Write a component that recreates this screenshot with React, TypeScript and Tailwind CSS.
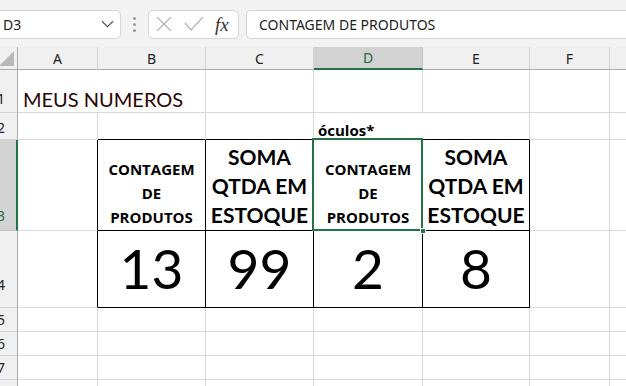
import React from "react";

const cols = ["A", "B", "C", "D", "E", "F", "G"];
const rowHeights = [43, 27, 91, 77, 24, 24, 24, 24];
// offset of the row number from the bottom of its row
const rowNumPad = [6, 4, 7, 15, 4, 4, 4, 4];

const grid = "border-r border-b border-[#dadada]";
const calibri = { fontFamily: "Lato, 'Noto Sans', sans-serif" };
const openSans = { fontFamily: "'Open Sans', 'Noto Sans', sans-serif" };

const HeaderCell = ({ label, selected }: { label: string; selected?: boolean }) => (
  <div
    className={
      selected
        ? "flex items-center justify-center border-r border-b-2 border-r-[#c4c4c4] border-b-[#217346] bg-[#d2d2d2] text-[14px] text-[#1e6b41]"
        : "flex items-center justify-center border-r border-b border-r-[#d4d4d4] border-b-[#ababab] bg-[#f0f0f0] text-[14px] text-[#222]"
    }>
    {label}
  </div>
);

const RowHeader = ({ n, selected }: { n: number; selected?: boolean }) => (
  <div
    className={
      selected
        ? "flex items-end overflow-hidden border-r-2 border-b border-r-[#217346] border-b-[#c4c4c4] bg-[#d2d2d2] text-[14px] leading-none text-[#1e6b41]"
        : "flex items-end overflow-hidden border-r border-b border-r-[#ababab] border-b-[#d4d4d4] bg-[#f0f0f0] text-[14px] leading-none text-[#222]"
    }
    style={{ paddingBottom: rowNumPad[n - 1] }}>
    <span className="-ml-[3px]">{n}</span>
  </div>
);

const SmallHead = () => (
  <div className="text-center text-[15px] font-bold leading-[24px] text-black" style={openSans}>
    CONTAGEM
    <br />
    DE
    <br />
    PRODUTOS
  </div>
);

const BigHead = () => (
  <div className="text-center text-[21px] font-bold leading-[29px] text-black" style={calibri}>
    SOMA
    <br />
    QTDA EM
    <br />
    ESTOQUE
  </div>
);

export default function App() {
  return (
    <div className="h-[386px] w-[626px] overflow-hidden bg-white" style={{ fontFamily: "'Noto Sans', 'Open Sans', sans-serif" }}>
      {/* formula bar */}
      <div className="flex h-[47px] items-center bg-[#f3f3f3] pt-[1px]">
        <div className="-ml-[6px] flex h-[29px] w-[127px] shrink-0 items-center justify-between rounded-[5px] border border-[#d6d6d6] bg-white pr-[6px] pl-[8px] text-[14px] text-[#222]">
          <span>D3</span>
          <svg width="13" height="8" viewBox="0 0 13 8" fill="none" stroke="#555" strokeWidth="1.2">
            <path d="M1 1.2 L6.5 6.6 L12 1.2" />
          </svg>
        </div>
        <div className="flex w-[27px] flex-col items-center gap-[3px]">
          <span className="h-[3px] w-[3px] rounded-full bg-[#9a9a9a]" />
          <span className="h-[3px] w-[3px] rounded-full bg-[#9a9a9a]" />
          <span className="h-[3px] w-[3px] rounded-full bg-[#9a9a9a]" />
        </div>
        <div className="flex h-[29px] w-[91px] items-center rounded-[5px] border border-[#d6d6d6] bg-white pl-[7px]">
          <svg width="16" height="16" viewBox="0 0 16 16" fill="none" stroke="#b5b5b5" strokeWidth="1.2">
            <path d="M1 1 L15 15 M15 1 L1 15" />
          </svg>
          <svg className="ml-[12px]" width="20" height="16" viewBox="0 0 20 16" fill="none" stroke="#b5b5b5" strokeWidth="1.2">
            <path d="M1 7 L7 14 L19 1" />
          </svg>
          <span
            className="ml-[11px] text-[19px] italic leading-none text-[#333]"
            style={{ fontFamily: "'Liberation Serif', 'DejaVu Serif', serif" }}>
            fx
          </span>
        </div>
        <div className="ml-[7px] flex h-[29px] flex-1 items-center rounded-l-[5px] border border-r-0 border-[#d6d6d6] bg-white pl-[12px] text-[14px] text-[#222]">
          CONTAGEM DE PRODUTOS
        </div>
      </div>

      {/* sheet */}
      <div
        className="grid w-[690px]"
        style={{
          gridTemplateColumns: "18px 80px 108px 108px 109px 107px 80px 80px",
          gridTemplateRows: `23px ${rowHeights.map((h) => `${h}px`).join(" ")}`,
        }}>
        {/* column headers */}
        <div className="relative border-r border-b border-r-[#ababab] border-b-[#ababab] bg-[#f0f0f0]">
          <svg className="absolute right-[3px] bottom-[3px]" width="15" height="15" viewBox="0 0 15 15">
            <path d="M15 0 L15 15 L0 15 Z" fill="#b9b9b9" />
          </svg>
        </div>
        {cols.map((c) => (
          <HeaderCell key={c} label={c} selected={c === "D"} />
        ))}

        {/* row 1 */}
        <RowHeader n={1} />
        <div className={`${grid} relative border-r-0`}>
          <span className="absolute bottom-[3px] left-[5px] whitespace-nowrap text-[20px] leading-none text-[#2a0505]" style={calibri}>
            MEUS NUMEROS
          </span>
        </div>
        <div className={grid} />
        <div className={grid} />
        <div className={grid} />
        <div className={grid} />
        <div className={grid} />
        <div className={grid} />

        {/* row 2 */}
        <RowHeader n={2} />
        <div className={grid} />
        <div className={`${grid} border-b-black`} />
        <div className={`${grid} border-b-black`} />
        <div className={`${grid} relative border-r-0 border-b-black`}>
          <span className="absolute bottom-[1px] left-[4px] whitespace-nowrap text-[15px] font-bold leading-none text-black" style={openSans}>
            óculos*
          </span>
        </div>
        <div className={`${grid} border-b-black`} />
        <div className={grid} />
        <div className={grid} />

        {/* row 3 */}
        <RowHeader n={3} selected />
        <div className={`${grid} border-r-black`} />
        <div className={`${grid} flex items-end justify-center border-black pb-[1px]`}>
          <SmallHead />
        </div>
        <div className={`${grid} flex items-end justify-center border-black pb-[1px]`}>
          <BigHead />
        </div>
        <div className={`${grid} relative flex items-end justify-center border-black pb-[1px]`}>
          <SmallHead />
          <div className="pointer-events-none absolute -top-[2px] -right-[1px] -bottom-[1px] -left-[2px] border-2 border-[#217346]" />
          <div className="absolute -right-[4px] -bottom-[4px] h-[6px] w-[6px] border border-white bg-[#217346]" />
        </div>
        <div className={`${grid} flex items-end justify-center border-black pb-[1px]`}>
          <BigHead />
        </div>
        <div className={grid} />
        <div className={grid} />

        {/* row 4 */}
        <RowHeader n={4} />
        <div className={`${grid} border-r-black`} />
        {["13", "99", "2", "8"].map((v) => (
          <div key={v} className={`${grid} flex items-end justify-center border-black pb-[11px]`} style={calibri}>
            <span className="text-[55px] leading-none text-black">{v}</span>
          </div>
        ))}
        <div className={grid} />
        <div className={grid} />

        {/* rows 5-8 */}
        {[5, 6, 7, 8].map((n) => (
          <React.Fragment key={n}>
            <RowHeader n={n} />
            <div className={grid} />
            <div className={grid} />
            <div className={grid} />
            <div className={grid} />
            <div className={grid} />
            <div className={grid} />
            <div className={grid} />
          </React.Fragment>
        ))}
      </div>
    </div>
  );
}
